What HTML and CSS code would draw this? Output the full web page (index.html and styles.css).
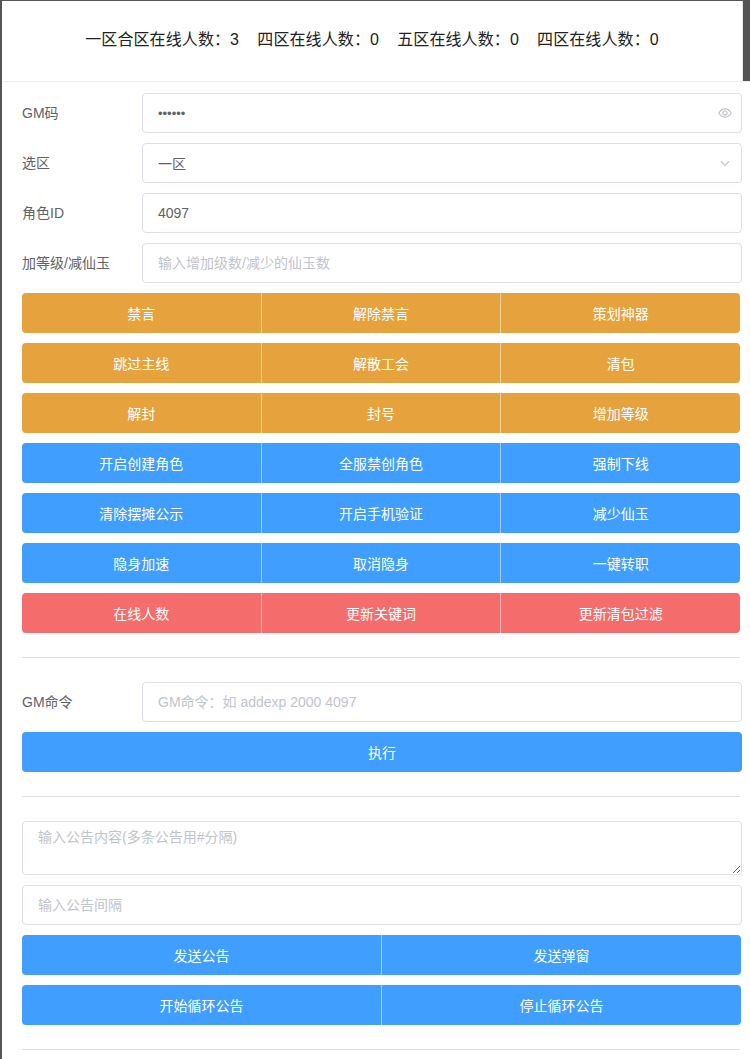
FILE: index.html
```html
<!DOCTYPE html>
<html lang="zh-CN">
<head>
<meta charset="utf-8">
<title>GM</title>
<link rel="stylesheet" href="styles.css">
</head>
<body>
<div class="page">
  <header class="top">
    <div class="stats">一区合区在线人数：3&nbsp;&nbsp;&nbsp;&nbsp;四区在线人数：0&nbsp;&nbsp;&nbsp;&nbsp;五区在线人数：0&nbsp;&nbsp;&nbsp;&nbsp;四区在线人数：0</div>
    <div class="strip"></div>
  </header>
  <main class="main">
    <div class="row">
      <label class="label">GM码</label>
      <div class="field">
        <input class="input pw" type="text" value="••••••" readonly>
        <svg class="suffix" width="14" height="14" viewBox="0 0 24 24"><path d="M1.5 12C4 7.5 7.8 5 12 5s8 2.5 10.5 7C20 16.5 16.2 19 12 19S4 16.5 1.5 12z" fill="none" stroke="#c0c4cc" stroke-width="2"/><circle cx="12" cy="12" r="3.5" fill="none" stroke="#c0c4cc" stroke-width="2"/></svg>
      </div>
    </div>
    <div class="row">
      <label class="label">选区</label>
      <div class="field">
        <input class="input" type="text" value="一区" readonly>
        <svg class="suffix" width="14" height="14" viewBox="0 0 24 24"><path d="M5 9l7 7 7-7" fill="none" stroke="#c0c4cc" stroke-width="2"/></svg>
      </div>
    </div>
    <div class="row">
      <label class="label">角色ID</label>
      <div class="field"><input class="input" type="text" value="4097" readonly></div>
    </div>
    <div class="row">
      <label class="label">加等级/减仙玉</label>
      <div class="field"><input class="input" type="text" placeholder="输入增加级数/减少的仙玉数"></div>
    </div>

    <div class="group g3 orange"><button>禁言</button><button>解除禁言</button><button>策划神器</button></div>
    <div class="group g3 orange"><button>跳过主线</button><button>解散工会</button><button>清包</button></div>
    <div class="group g3 orange"><button>解封</button><button>封号</button><button>增加等级</button></div>
    <div class="group g3 blue"><button>开启创建角色</button><button>全服禁创角色</button><button>强制下线</button></div>
    <div class="group g3 blue"><button>清除摆摊公示</button><button>开启手机验证</button><button>减少仙玉</button></div>
    <div class="group g3 blue"><button>隐身加速</button><button>取消隐身</button><button>一键转职</button></div>
    <div class="group g3 red"><button>在线人数</button><button>更新关键词</button><button>更新清包过滤</button></div>

    <div class="divider"></div>

    <div class="row">
      <label class="label">GM命令</label>
      <div class="field"><input class="input" type="text" placeholder="GM命令：如 addexp 2000 4097"></div>
    </div>
    <div class="group blue"><button>执行</button></div>

    <div class="divider"></div>

    <textarea class="textarea" placeholder="输入公告内容(多条公告用#分隔)"></textarea>
    <input class="input full" type="text" placeholder="输入公告间隔">
    <div class="group g2 blue"><button>发送公告</button><button>发送弹窗</button></div>
    <div class="group g2 blue"><button>开始循环公告</button><button>停止循环公告</button></div>

    <div class="divider"></div>
  </main>
</div>
</body>
</html>
```

FILE: styles.css
```css
* { box-sizing: border-box; }
html, body {
  margin: 0;
  padding: 0;
  background: #ffffff;
  font-family: "Liberation Sans", "Noto Sans CJK SC", sans-serif;
  color: #606266;
}
.page {
  border-left: 2px solid #555555;
  border-top: 1px solid #555555;
  min-height: 1059px;
}
.top {
  height: 81px;
  display: flex;
  border-bottom: 1px solid #ebeef5;
}
.stats {
  flex: 1;
  display: flex;
  align-items: center;
  justify-content: center;
  font-size: 16px;
  letter-spacing: 0.1px;
  color: #222222;
  border-right: 1px solid #e6e6e6;
  padding: 0 0 6px 0;
}
.strip {
  width: 7px;
  background: #555555;
}
.main {
  width: 740px;
  padding: 11px 0 0 20px;
}
.row {
  display: flex;
  align-items: center;
  height: 40px;
  margin-bottom: 10px;
}
.label {
  width: 120px;
  font-size: 14px;
  color: #606266;
  padding-bottom: 2px;
}
.field {
  flex: 1;
  position: relative;
  height: 40px;
}
.input {
  width: 100%;
  height: 40px;
  border: 1px solid #dcdfe6;
  border-radius: 4px;
  padding: 0 15px;
  font-family: inherit;
  font-size: 14px;
  color: #606266;
  background: #fff;
  outline: none;
}
.input::placeholder, .textarea::placeholder { color: #c0c4cc; }
.input.pw { font-size: 13px; }
.input.full { display: block; margin-bottom: 10px; }
.suffix {
  position: absolute;
  right: 10px;
  top: 13px;
}
.group {
  display: flex;
  height: 40px;
  margin-bottom: 10px;
  border-radius: 4px;
  overflow: hidden;
}
.group.g3 { width: 718px; }
.group.g2 { width: 719px; }
.group button {
  flex: 1;
  border: 0;
  margin: 0;
  padding: 0;
  font-family: inherit;
  font-size: 14px;
  color: #ffffff;
  border-left: 1px solid rgba(255, 255, 255, 0.5);
}
.group button:first-child { border-left: 0; }
.orange button { background: #e6a23c; }
.blue button { background: #409eff; }
.red button { background: #f56c6c; }
.divider {
  height: 1px;
  background: #dcdfe6;
  margin: 24px 2px 24px 0;
}
.textarea {
  display: block;
  width: 100%;
  height: 54px;
  border: 1px solid #dcdfe6;
  border-radius: 4px;
  padding: 5px 15px;
  font-family: inherit;
  font-size: 14px;
  line-height: 1.5;
  color: #606266;
  resize: vertical;
  margin-bottom: 10px;
  outline: none;
}
```
